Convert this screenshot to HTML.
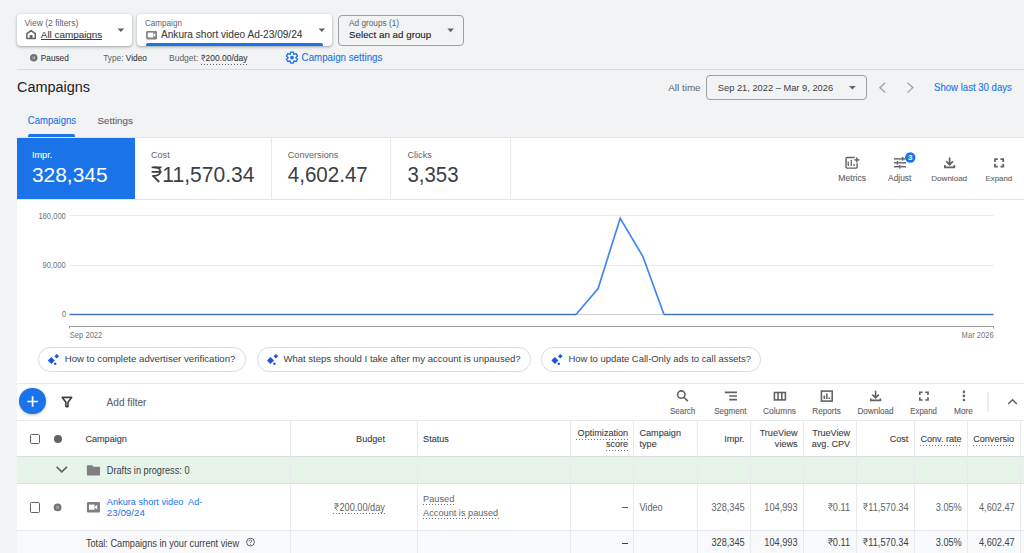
<!DOCTYPE html>
<html><head><meta charset="utf-8">
<style>
*{box-sizing:border-box;margin:0;padding:0}
html,body{width:1024px;height:553px;overflow:hidden;background:#f1f3f4;font-family:"Liberation Sans",sans-serif;color:#3c4043;position:relative}
.a{position:absolute;white-space:nowrap;line-height:1}
.box{position:absolute;background:#fff;border-radius:4px;box-shadow:0 1px 2px rgba(60,64,67,.3),0 1px 3px 1px rgba(60,64,67,.12)}
.hl{position:absolute;height:1px;background:#dadce0}
.vl{position:absolute;width:1px;background:#e3e3e3}
</style></head><body>
<div class="box" style="left:17px;top:14px;width:115px;height:32px"></div>
<div class="box" style="left:137px;top:14px;width:195px;height:32px"></div>
<div style="position:absolute;left:337.5px;top:14.5px;width:126px;height:31px;border:1px solid #9aa0a6;border-radius:4px"></div>
<div class="a" style="left:146px;top:43px;width:177px;height:2.6px;background:#1a73e8;border-radius:2px 2px 0 0"></div>
<div class="a" style="top:19px;left:24.60px;font-size:8.50px;color:#5f6368;">View (2 filters)</div>
<div class="a" style="top:30px;left:40.80px;font-size:9.90px;color:#3c4043;-webkit-text-stroke:0.1px currentColor;">All campaigns</div>
<div class="a" style="left:40.8px;top:39px;width:61.5px;height:1px;background:#3c4043"></div>
<div class="a" style="top:20px;left:145.00px;font-size:8.10px;color:#5f6368;transform:scaleY(1.04);transform-origin:0 6px;">Campaign</div>
<div class="a" style="top:30px;left:161.00px;font-size:10.10px;color:#3c4043;-webkit-text-stroke:0.1px currentColor;">Ankura short video Ad-23/09/24</div>
<div class="a" style="top:20px;left:349.00px;font-size:8.25px;color:#5f6368;transform:scaleY(1.04);transform-origin:0 6px;">Ad groups (1)</div>
<div class="a" style="top:30px;left:349.00px;font-size:9.80px;color:#202124;-webkit-text-stroke:0.1px currentColor;">Select an ad group</div>
<div class="a" style="top:55px;left:40.80px;font-size:8.25px;color:#3c4043;-webkit-text-stroke:0.1px currentColor;transform:scaleY(1.12);transform-origin:0 6px;">Paused</div>
<div class="a" style="top:54px;left:103.25px;font-size:8.30px;color:#5f6368;transform:scaleY(1.1);transform-origin:0 7px;">Type: <span style="color:#3c4043;-webkit-text-stroke:0.1px #3c4043">Video</span></div>
<div class="a" style="top:54px;left:169.00px;font-size:8.50px;color:#5f6368;">Budget: <span style="color:#3c4043;background:linear-gradient(to right,#5f6368 50%,transparent 50%) 0 100%/3px 1px repeat-x;padding-bottom:2px;-webkit-text-stroke:0.1px #3c4043"><svg style="display:inline-block;width:0.56em;height:0.72em;vertical-align:baseline;overflow:visible" viewBox="0 0 0.56 0.72"><g fill="none" stroke="currentColor"><path d="M0.03 0.04 H0.5 M0.03 0.245 H0.5" stroke-width="0.076"/><path d="M0.14 0.04 Q0.44 0.04 0.44 0.235 Q0.44 0.43 0.06 0.43" stroke-width="0.08"/><path d="M0.1 0.43 L0.39 0.715" stroke-width="0.09"/></g></svg>200.00/day</span></div>
<div class="a" style="top:53px;left:301.60px;font-size:9.75px;color:#1a73e8;-webkit-text-stroke:0.1px currentColor;transform:scaleY(1.04);transform-origin:0 8px;">Campaign settings</div>
<div class="hl" style="left:17px;top:69px;width:1007px"></div>
<div class="a" style="top:80px;left:17.00px;font-size:14.45px;color:#202124;transform:scaleY(1.04);transform-origin:0 12px;">Campaigns</div>
<div class="a" style="top:83px;left:668.30px;font-size:9.85px;color:#5f6368;">All time</div>
<div style="position:absolute;left:706px;top:75px;width:161px;height:24.5px;border:1px solid #9aa0a6;border-radius:4px"></div>
<div class="a" style="top:84px;left:717.80px;font-size:9.30px;color:#3c4043;transform:scaleY(1.04);transform-origin:0 7px;">Sep 21, 2022 – Mar 9, 2026</div>
<div class="a" style="top:83px;left:934.00px;font-size:9.60px;color:#1a73e8;-webkit-text-stroke:0.1px currentColor;transform:scaleY(1.06);transform-origin:0 8px;">Show last 30 days</div>
<div class="a" style="top:116px;left:27.80px;font-size:9.55px;color:#1a73e8;-webkit-text-stroke:0.1px currentColor;transform:scaleY(1.05);transform-origin:0 8px;">Campaigns</div>
<div class="a" style="top:116px;left:97.60px;font-size:9.75px;color:#5f6368;-webkit-text-stroke:0.1px currentColor;transform:scaleY(1.02);transform-origin:0 8px;">Settings</div>
<div class="a" style="left:28.4px;top:134px;width:46.3px;height:2.6px;background:#1a73e8;border-radius:2px 2px 0 0"></div>
<div class="a" style="left:17px;top:137.5px;width:1007px;height:416px;background:#fff"></div>
<div class="hl" style="left:17px;top:137px;width:1007px;background:#e3e5e8"></div>
<div class="a" style="left:17px;top:137.5px;width:118px;height:61.5px;background:#1a73e8"></div>
<div class="vl" style="left:271px;top:138px;height:61px;background:#e8eaed"></div>
<div class="vl" style="left:390px;top:138px;height:61px;background:#e8eaed"></div>
<div class="vl" style="left:510px;top:138px;height:61px;background:#e8eaed"></div>
<div class="hl" style="left:17px;top:199px;width:1007px;background:#e3e5e8"></div>
<div class="a" style="top:151px;left:287.80px;font-size:9.10px;color:#5f6368;">Conversions</div>
<div class="a" style="top:151px;left:32.00px;font-size:9.10px;color:#fff;-webkit-text-stroke:0.1px currentColor;">Impr.</div>
<div class="a" style="top:151px;left:151.00px;font-size:9.10px;color:#5f6368;">Cost</div>
<div class="a" style="top:151px;left:407.50px;font-size:9.10px;color:#5f6368;">Clicks</div>
<div class="a" style="top:165px;left:32.00px;font-size:20.90px;color:#fff;">328,345</div>
<div class="a" style="top:164px;left:150.58px;font-size:21.05px;color:#3c4043;transform:scaleY(1.03);transform-origin:0 18px;"><svg style="display:inline-block;width:0.56em;height:0.72em;vertical-align:baseline;overflow:visible" viewBox="0 0 0.56 0.72"><g fill="none" stroke="currentColor"><path d="M0.03 0.04 H0.5 M0.03 0.245 H0.5" stroke-width="0.076"/><path d="M0.14 0.04 Q0.44 0.04 0.44 0.235 Q0.44 0.43 0.06 0.43" stroke-width="0.08"/><path d="M0.1 0.43 L0.39 0.715" stroke-width="0.09"/></g></svg>11,570.34</div>
<div class="a" style="top:165px;left:287.80px;font-size:20.55px;color:#3c4043;transform:scaleY(1.06);transform-origin:0 17px;">4,602.47</div>
<div class="a" style="top:165px;left:407.50px;font-size:20.40px;color:#3c4043;transform:scaleY(1.06);transform-origin:0 17px;">3,353</div>
<div class="a" style="top:174px;left:838.30px;font-size:8.65px;color:#5f6368;-webkit-text-stroke:0.1px currentColor;">Metrics</div>
<div class="a" style="top:174px;left:888.10px;font-size:8.40px;color:#5f6368;-webkit-text-stroke:0.1px currentColor;">Adjust</div>
<div class="a" style="top:175px;left:931.30px;font-size:8.05px;color:#5f6368;-webkit-text-stroke:0.1px currentColor;">Download</div>
<div class="a" style="top:175px;left:985.50px;font-size:7.85px;color:#5f6368;-webkit-text-stroke:0.1px currentColor;">Expand</div>
<svg class="a" style="left:830px;top:150px" width="194" height="22" viewBox="830 150 194 22">
 <g fill="none" stroke="#5f6368" stroke-width="1.4">
  <path d="M854.6 157.5 H847 Q846 157.5 846 158.5 V167.1 Q846 168.1 847 168.1 H856.1 Q857.1 168.1 857.1 167.1 V163.3"/>
 </g>
 <g fill="#5f6368">
  <rect x="847.6" y="161.6" width="1.3" height="4.3"/><rect x="850.6" y="159.9" width="1.3" height="6"/><rect x="853.4" y="164.1" width="1.4" height="1.8"/>
  <rect x="856.1" y="157.3" width="1.4" height="5.2"/><rect x="854.2" y="159.2" width="5.2" height="1.4"/>
 </g>
 <g fill="#5f6368">
  <rect x="893.9" y="158.2" width="8" height="1.4"/><rect x="902.6" y="158.2" width="3" height="1.4"/>
  <rect x="893.9" y="162.1" width="3" height="1.4"/><rect x="898.2" y="162.1" width="7.8" height="1.4"/>
  <rect x="893.9" y="166" width="5.3" height="1.4"/><rect x="900.6" y="166" width="5.4" height="1.4"/>
  <rect x="901.8" y="157" width="1.5" height="3.7"/><rect x="896.7" y="161" width="1.5" height="3.6"/><rect x="899.1" y="164.9" width="1.5" height="3.7"/>
 </g>
 <circle cx="910.3" cy="157.5" r="5.2" fill="#1a73e8"/>
 <text x="910.3" y="160.4" font-size="8" fill="#fff" text-anchor="middle" font-family="Liberation Sans" font-weight="bold">3</text>
 <g fill="none" stroke="#5f6368" stroke-width="1.7">
  <path d="M949.6 157.6 V164.5 M946.3 161.4 L949.6 164.7 L952.9 161.4"/>
  <path d="M944.9 165 V167.3 H954.3 V165"/>
 </g>
 <g fill="none" stroke="#5f6368" stroke-width="1.8">
  <path d="M995 162 V159.2 H997.8 M1000.4 159.2 H1003.2 V162 M1003.2 163.8 V166.6 H1000.4 M997.8 166.6 H995 V163.8"/>
 </g>
</svg>
<svg class="a" style="left:0;top:200px" width="1024" height="180" viewBox="0 200 1024 180">
 <path d="M69.5 215.5 H993.5 M69.5 265.5 H993.5" stroke="#ebebeb" stroke-width="1"/>
 <path d="M69.5 314.5 H993.5" stroke="#cccccc" stroke-width="1"/>
 <path d="M69.5 326.5 H993.5 M69.5 326 V328.5 M993.5 326 V328.5" stroke="#9e9e9e" stroke-width="1"/>
 <path d="M69.5 314.5 L576 314.5 M664 314.5 L993.5 314.5" fill="none" stroke="#4673c2" stroke-width="1.5"/>
 <path d="M576 314.5 L598.1 288.5 L620.2 218.2 L642.8 256.3 L664 314.5" fill="none" stroke="#4285f4" stroke-width="1.7" stroke-linejoin="miter"/>
</svg>
<div class="a" style="top:213px;left:38.40px;font-size:7.60px;color:#757575;transform:scaleY(1.12);transform-origin:0 6px;">180,000</div>
<div class="a" style="top:262px;left:42.55px;font-size:7.60px;color:#757575;transform:scaleY(1.12);transform-origin:0 6px;">90,000</div>
<div class="a" style="top:311px;left:61.97px;font-size:7.60px;color:#757575;transform:scaleY(1.12);transform-origin:0 6px;">0</div>
<div class="a" style="top:332px;left:69.80px;font-size:7.60px;color:#757575;transform:scaleY(1.1);transform-origin:0 6px;">Sep 2022</div>
<div class="a" style="top:332px;left:961.59px;font-size:7.60px;color:#757575;transform:scaleY(1.1);transform-origin:0 6px;">Mar 2026</div>
<div class="a" style="left:37.8px;top:347.3px;width:208.1px;height:24.4px;border:1px solid #dadce0;border-radius:12.2px"></div>
<div class="a" style="left:257px;top:347.3px;width:273.7px;height:24.4px;border:1px solid #dadce0;border-radius:12.2px"></div>
<div class="a" style="left:541.4px;top:347.3px;width:219.8px;height:24.4px;border:1px solid #dadce0;border-radius:12.2px"></div>
<div class="a" style="top:354px;left:64.70px;font-size:9.65px;color:#3c4043;">How to complete advertiser verification?</div>
<div class="a" style="top:354px;left:283.40px;font-size:9.55px;color:#3c4043;">What steps should I take after my account is unpaused?</div>
<div class="a" style="top:354px;left:568.40px;font-size:9.45px;color:#3c4043;">How to update Call-Only ads to call assets?</div>
<svg class="a" style="left:0;top:345px" width="620" height="30" viewBox="0 345 620 30">
 <g id="sp" fill="#1a56db">
  <path d="M51.3 357 L54.8 360.5 L51.3 364 L47.8 360.5 Z"/>
  <path d="M56.7 354 L59 356.3 L56.7 358.6 L54.4 356.3 Z"/>
  <circle cx="55.2" cy="363.7" r="1.2"/>
 </g>
 <use href="#sp" x="219.2"/>
 <use href="#sp" x="503.6"/>
</svg>
<div class="hl" style="left:17px;top:383px;width:1007px;background:#e8eaed"></div>
<div class="a" style="left:19.4px;top:388px;width:26.4px;height:26.4px;border-radius:50%;background:#1a73e8;box-shadow:0 1px 3px rgba(60,64,67,.35)"></div>
<svg class="a" style="left:0;top:380px" width="1024" height="40" viewBox="0 380 1024 40">
 <path d="M32.6 396.2 V406.8 M27.3 401.5 H37.9" stroke="#fff" stroke-width="1.7"/>
 <path d="M62.3 397.4 H71.6 L68 402.2 V406.6 H65.9 V402.2 Z" fill="none" stroke="#3c4043" stroke-width="1.6" stroke-linejoin="round"/>
 <g fill="none" stroke="#5f6368" stroke-width="1.6">
  <circle cx="681.3" cy="394.6" r="3.7"/>
  <path d="M684 397.3 L687.8 401.1"/>
  <path d="M724.8 392.4 H737 M729.2 396 H737 M729.2 399.6 H737"/>
  <rect x="774.4" y="392.5" width="11" height="7.4"/>
  <path d="M778 392.5 V399.9 M781.8 392.5 V399.9"/>
  <rect x="821.4" y="391.1" width="10.8" height="10"/>
  <path d="M824.3 399 V395.5 M826.8 399 V393.5 M829.3 399 V397.5"/>
  <path d="M875.6 390.8 V397.8 M872.4 394.6 L875.6 397.8 L878.8 394.6"/>
  <path d="M870.8 398.5 V400.4 H880.4 V398.5"/>
  <path d="M919.8 395 V392.3 H922.6 M925.2 392.3 H928 V395 M928 397.3 V400 H925.2 M922.6 400 H919.8 V397.3"/>
  <path d="M1008.2 404 L1012.5 399.8 L1016.8 404"/>
 </g>
 <g fill="#5f6368"><circle cx="963.9" cy="391.9" r="1.3"/><circle cx="963.9" cy="395.9" r="1.3"/><circle cx="963.9" cy="400" r="1.3"/></g>
 <path d="M988 391.6 V412" stroke="#dadce0" stroke-width="1"/>
</svg>
<div class="a" style="top:398px;left:106.60px;font-size:10.10px;color:#5f6368;-webkit-text-stroke:0.1px currentColor;">Add filter</div>
<div class="a" style="top:408px;left:669.90px;font-size:8.00px;color:#5f6368;-webkit-text-stroke:0.1px currentColor;transform:scaleY(1.1);transform-origin:0 6px;">Search</div>
<div class="a" style="top:408px;left:714.20px;font-size:8.10px;color:#5f6368;-webkit-text-stroke:0.1px currentColor;transform:scaleY(1.1);transform-origin:0 6px;">Segment</div>
<div class="a" style="top:407px;left:763.10px;font-size:8.35px;color:#5f6368;-webkit-text-stroke:0.1px currentColor;transform:scaleY(1.1);transform-origin:0 7px;">Columns</div>
<div class="a" style="top:408px;left:812.30px;font-size:8.15px;color:#5f6368;-webkit-text-stroke:0.1px currentColor;transform:scaleY(1.1);transform-origin:0 6px;">Reports</div>
<div class="a" style="top:408px;left:857.50px;font-size:8.15px;color:#5f6368;-webkit-text-stroke:0.1px currentColor;transform:scaleY(1.1);transform-origin:0 6px;">Download</div>
<div class="a" style="top:408px;left:910.30px;font-size:7.85px;color:#5f6368;-webkit-text-stroke:0.1px currentColor;transform:scaleY(1.1);transform-origin:0 6px;">Expand</div>
<div class="a" style="top:407px;left:954.00px;font-size:8.35px;color:#5f6368;-webkit-text-stroke:0.1px currentColor;transform:scaleY(1.1);transform-origin:0 7px;">More</div>
<div class="hl" style="left:17px;top:420px;width:1007px;background:#e8eaed"></div>
<div class="a" style="left:17px;top:456.5px;width:1007px;height:27px;background:#e6f4ea"></div>
<div class="a" style="left:17px;top:530.5px;width:1007px;height:23px;background:#f8f9fa"></div>
<div class="hl" style="left:17px;top:455.5px;width:1007px;background:#dadce0"></div>
<div class="hl" style="left:17px;top:483px;width:1007px;background:#e0e0e0"></div>
<div class="hl" style="left:17px;top:530px;width:1007px;background:#e8eaed"></div>
<div class="vl" style="left:290.0px;top:421px;height:132px;background:#e8eaed"></div>
<div class="vl" style="left:417.0px;top:421px;height:132px;background:#e8eaed"></div>
<div class="vl" style="left:570.0px;top:421px;height:132px;background:#e8eaed"></div>
<div class="vl" style="left:633.0px;top:421px;height:132px;background:#e8eaed"></div>
<div class="vl" style="left:697.0px;top:421px;height:132px;background:#e8eaed"></div>
<div class="vl" style="left:750.0px;top:421px;height:132px;background:#e8eaed"></div>
<div class="vl" style="left:803.1px;top:421px;height:132px;background:#e8eaed"></div>
<div class="vl" style="left:855.9px;top:421px;height:132px;background:#e8eaed"></div>
<div class="vl" style="left:914.1px;top:421px;height:132px;background:#e8eaed"></div>
<div class="vl" style="left:967.1px;top:421px;height:132px;background:#e8eaed"></div>
<div class="vl" style="left:1020.2px;top:421px;height:132px;background:#e8eaed"></div>
<div class="a" style="left:29.8px;top:433.5px;width:10.5px;height:10.3px;border:1.6px solid #5f6368;border-radius:1.5px"></div>
<div class="a" style="left:53.6px;top:434.5px;width:8.2px;height:8.2px;border-radius:50%;background:#5f6368"></div>
<div class="a" style="top:435px;left:356.10px;font-size:9.10px;color:#3c4043;-webkit-text-stroke:0.1px currentColor;transform:scaleY(1.05);transform-origin:0 7px;">Budget</div>
<div class="a" style="top:435px;left:85.40px;font-size:9.10px;color:#3c4043;-webkit-text-stroke:0.1px currentColor;transform:scaleY(1.05);transform-origin:0 7px;">Campaign</div>
<div class="a" style="top:435px;left:423.10px;font-size:9.10px;color:#3c4043;-webkit-text-stroke:0.1px currentColor;transform:scaleY(1.05);transform-origin:0 7px;">Status</div>
<div class="a" style="top:429px;left:577.62px;font-size:9.10px;color:#3c4043;-webkit-text-stroke:0.1px currentColor;">Optimization</div>
<div class="a" style="top:440px;left:605.95px;font-size:9.10px;color:#3c4043;-webkit-text-stroke:0.1px currentColor;">score</div>
<div class="a" style="left:576px;top:438.6px;width:52.2px;height:1px;background:linear-gradient(to right,#70757a 50%,transparent 50%) 0 0/3px 1px repeat-x"></div>
<div class="a" style="left:606px;top:449.5px;width:22.2px;height:1px;background:linear-gradient(to right,#70757a 50%,transparent 50%) 0 0/3px 1px repeat-x"></div>
<div class="a" style="top:429px;left:639.50px;font-size:9.10px;color:#3c4043;-webkit-text-stroke:0.1px currentColor;">Campaign</div>
<div class="a" style="top:440px;left:639.50px;font-size:9.10px;color:#3c4043;-webkit-text-stroke:0.1px currentColor;">type</div>
<div class="a" style="top:435px;left:724.27px;font-size:9.10px;color:#3c4043;-webkit-text-stroke:0.1px currentColor;transform:scaleY(1.05);transform-origin:0 7px;">Impr.</div>
<div class="a" style="top:429px;left:759.64px;font-size:9.10px;color:#3c4043;-webkit-text-stroke:0.1px currentColor;transform:scaleY(1.04);transform-origin:0 7px;">TrueView</div>
<div class="a" style="top:440px;left:774.84px;font-size:9.10px;color:#3c4043;-webkit-text-stroke:0.1px currentColor;transform:scaleY(1.04);transform-origin:0 7px;">views</div>
<div class="a" style="top:429px;left:812.24px;font-size:9.10px;color:#3c4043;-webkit-text-stroke:0.1px currentColor;transform:scaleY(1.04);transform-origin:0 7px;">TrueView</div>
<div class="a" style="top:440px;left:811.76px;font-size:9.10px;color:#3c4043;-webkit-text-stroke:0.1px currentColor;transform:scaleY(1.04);transform-origin:0 7px;">avg. CPV</div>
<div class="a" style="top:435px;left:889.69px;font-size:9.10px;color:#3c4043;-webkit-text-stroke:0.1px currentColor;transform:scaleY(1.05);transform-origin:0 7px;">Cost</div>
<div class="a" style="top:435px;left:920.40px;font-size:9.10px;color:#3c4043;-webkit-text-stroke:0.1px currentColor;transform:scaleY(1.05);transform-origin:0 7px;">Conv. rate</div>
<div class="a" style="top:435px;left:973.20px;font-size:9.10px;color:#3c4043;-webkit-text-stroke:0.1px currentColor;transform:scaleY(1.05);transform-origin:0 7px;">Conversio</div>
<div class="a" style="left:920.4px;top:444.6px;width:41.5px;height:1px;background:linear-gradient(to right,#70757a 50%,transparent 50%) 0 0/3px 1px repeat-x"></div>
<div class="a" style="left:973.2px;top:444.6px;width:41.5px;height:1px;background:linear-gradient(to right,#70757a 50%,transparent 50%) 0 0/3px 1px repeat-x"></div>
<svg class="a" style="left:0;top:456px" width="120" height="28" viewBox="0 456 120 28">
 <path d="M56.6 466.8 L61.8 471.8 L67 466.8" fill="none" stroke="#5f6368" stroke-width="1.6"/>
 <path d="M86.9 466 Q86.9 465.2 87.7 465.2 H92.1 L93.6 466.7 H99.2 Q100 466.7 100 467.5 V474.7 Q100 475.5 99.2 475.5 H87.7 Q86.9 475.5 86.9 474.7 Z" fill="#808080"/>
</svg>
<div class="a" style="top:467px;left:106.80px;font-size:9.20px;color:#3c4043;transform:scaleY(1.12);transform-origin:0 7px;">Drafts in progress: 0</div>
<div class="a" style="left:29.7px;top:502px;width:10.6px;height:10.6px;border:1.6px solid #5f6368;border-radius:1.5px"></div>
<svg class="a" style="left:0;top:484px" width="120" height="46" viewBox="0 484 120 46">
 <circle cx="57.6" cy="507.3" r="3.9" fill="#737373"/>
 <path d="M56.8 505.7 V508.9 M58.4 505.7 V508.9" stroke="#c4c4c4" stroke-width="0.8"/>
 <rect x="86.9" y="501.9" width="13.1" height="10.7" rx="1.3" fill="#808080"/>
 <rect x="89" y="504.6" width="5.6" height="5.1" fill="#fff"/>
 <path d="M94.4 507.15 L97.2 504.8 V509.5 Z" fill="#fff"/>
</svg>
<div class="a" style="top:498px;left:106.80px;font-size:9.20px;color:#1a73e8;transform:scaleY(1.07);transform-origin:0 7px;">Ankura short video&nbsp; Ad-</div>
<div class="a" style="top:508px;left:106.80px;font-size:9.80px;color:#1a73e8;">23/09/24</div>
<div class="a" style="top:504px;left:334.32px;font-size:9.20px;color:#5f6368;transform:scaleY(1.1);transform-origin:0 7px;"><svg style="display:inline-block;width:0.56em;height:0.72em;vertical-align:baseline;overflow:visible" viewBox="0 0 0.56 0.72"><g fill="none" stroke="currentColor"><path d="M0.03 0.04 H0.5 M0.03 0.245 H0.5" stroke-width="0.076"/><path d="M0.14 0.04 Q0.44 0.04 0.44 0.235 Q0.44 0.43 0.06 0.43" stroke-width="0.08"/><path d="M0.1 0.43 L0.39 0.715" stroke-width="0.09"/></g></svg>200.00/day</div>
<div class="a" style="left:333.3px;top:513px;width:51.7px;height:1px;background:linear-gradient(to right,#70757a 50%,transparent 50%) 0 0/3px 1px repeat-x"></div>
<div class="a" style="top:495px;left:423.10px;font-size:9.20px;color:#5f6368;transform:scaleY(1.08);transform-origin:0 7px;">Paused</div>
<div class="a" style="left:423.1px;top:504.3px;width:30.7px;height:1px;background:linear-gradient(to right,#70757a 50%,transparent 50%) 0 0/3px 1px repeat-x"></div>
<div class="a" style="top:509px;left:423.10px;font-size:9.20px;color:#5f6368;transform:scaleY(1.07);transform-origin:0 7px;">Account is paused</div>
<div class="a" style="left:423.1px;top:518.3px;width:76.2px;height:1px;background:linear-gradient(to right,#70757a 50%,transparent 50%) 0 0/3px 1px repeat-x"></div>
<div class="a" style="left:621.6px;top:507px;width:6.4px;height:1px;background:#5f6368"></div>
<div class="a" style="top:504px;left:639.40px;font-size:9.20px;color:#5f6368;transform:scaleY(1.1);transform-origin:0 7px;">Video</div>
<div class="a" style="top:504px;left:711.44px;font-size:9.20px;color:#5f6368;transform:scaleY(1.1);transform-origin:0 7px;">328,345</div>
<div class="a" style="top:504px;left:764.34px;font-size:9.20px;color:#5f6368;transform:scaleY(1.1);transform-origin:0 7px;">104,993</div>
<div class="a" style="top:504px;left:827.73px;font-size:9.20px;color:#5f6368;transform:scaleY(1.1);transform-origin:0 7px;"><svg style="display:inline-block;width:0.56em;height:0.72em;vertical-align:baseline;overflow:visible" viewBox="0 0 0.56 0.72"><g fill="none" stroke="currentColor"><path d="M0.03 0.04 H0.5 M0.03 0.245 H0.5" stroke-width="0.076"/><path d="M0.14 0.04 Q0.44 0.04 0.44 0.235 Q0.44 0.43 0.06 0.43" stroke-width="0.08"/><path d="M0.1 0.43 L0.39 0.715" stroke-width="0.09"/></g></svg>0.11</div>
<div class="a" style="top:504px;left:863.20px;font-size:9.20px;color:#5f6368;transform:scaleY(1.1);transform-origin:0 7px;"><svg style="display:inline-block;width:0.56em;height:0.72em;vertical-align:baseline;overflow:visible" viewBox="0 0 0.56 0.72"><g fill="none" stroke="currentColor"><path d="M0.03 0.04 H0.5 M0.03 0.245 H0.5" stroke-width="0.076"/><path d="M0.14 0.04 Q0.44 0.04 0.44 0.235 Q0.44 0.43 0.06 0.43" stroke-width="0.08"/><path d="M0.1 0.43 L0.39 0.715" stroke-width="0.09"/></g></svg>11,570.34</div>
<div class="a" style="top:504px;left:935.72px;font-size:9.20px;color:#5f6368;transform:scaleY(1.1);transform-origin:0 7px;">3.05%</div>
<div class="a" style="top:504px;left:978.98px;font-size:9.20px;color:#5f6368;transform:scaleY(1.1);transform-origin:0 7px;">4,602.47</div>
<div class="a" style="top:540px;left:85.90px;font-size:9.20px;color:#3c4043;transform:scaleY(1.1);transform-origin:0 7px;">Total: Campaigns in your current view</div>
<svg class="a" style="left:244px;top:536px" width="14" height="14" viewBox="244 536 14 14">
 <circle cx="250.5" cy="542.1" r="3.9" fill="none" stroke="#5f6368" stroke-width="1"/>
 <path d="M249.2 541.3 Q249.2 539.9 250.5 539.9 Q251.8 539.9 251.8 541.1 Q251.8 541.9 250.5 542.4 V543" fill="none" stroke="#5f6368" stroke-width="0.9"/>
 <circle cx="250.5" cy="544.2" r="0.5" fill="#5f6368"/>
</svg>
<div class="a" style="left:621.6px;top:542.7px;width:6.4px;height:1px;background:#3c4043"></div>
<div class="a" style="top:539px;left:711.44px;font-size:9.20px;color:#3c4043;transform:scaleY(1.1);transform-origin:0 7px;">328,345</div>
<div class="a" style="top:539px;left:764.34px;font-size:9.20px;color:#3c4043;transform:scaleY(1.1);transform-origin:0 7px;">104,993</div>
<div class="a" style="top:539px;left:827.73px;font-size:9.20px;color:#3c4043;transform:scaleY(1.1);transform-origin:0 7px;"><svg style="display:inline-block;width:0.56em;height:0.72em;vertical-align:baseline;overflow:visible" viewBox="0 0 0.56 0.72"><g fill="none" stroke="currentColor"><path d="M0.03 0.04 H0.5 M0.03 0.245 H0.5" stroke-width="0.076"/><path d="M0.14 0.04 Q0.44 0.04 0.44 0.235 Q0.44 0.43 0.06 0.43" stroke-width="0.08"/><path d="M0.1 0.43 L0.39 0.715" stroke-width="0.09"/></g></svg>0.11</div>
<div class="a" style="top:539px;left:863.20px;font-size:9.20px;color:#3c4043;transform:scaleY(1.1);transform-origin:0 7px;"><svg style="display:inline-block;width:0.56em;height:0.72em;vertical-align:baseline;overflow:visible" viewBox="0 0 0.56 0.72"><g fill="none" stroke="currentColor"><path d="M0.03 0.04 H0.5 M0.03 0.245 H0.5" stroke-width="0.076"/><path d="M0.14 0.04 Q0.44 0.04 0.44 0.235 Q0.44 0.43 0.06 0.43" stroke-width="0.08"/><path d="M0.1 0.43 L0.39 0.715" stroke-width="0.09"/></g></svg>11,570.34</div>
<div class="a" style="top:539px;left:935.72px;font-size:9.20px;color:#3c4043;transform:scaleY(1.1);transform-origin:0 7px;">3.05%</div>
<div class="a" style="top:539px;left:978.98px;font-size:9.20px;color:#3c4043;transform:scaleY(1.1);transform-origin:0 7px;">4,602.47</div>
<svg class="a" style="left:0;top:0" width="480" height="70" viewBox="0 0 480 70">
 <path d="M26.9 38.6 V33.6 L31.1 30.6 L35.3 33.6 V38.6 Z" fill="none" stroke="#5f6368" stroke-width="1.5" stroke-linejoin="round"/>
 <rect x="29.7" y="35" width="2.8" height="3.8" fill="#5f6368"/>
 <path d="M117.5 28.4 H124.2 L120.85 32 Z" fill="#5f6368"/>
 <rect x="146.1" y="30.9" width="10.9" height="8.5" rx="1.3" fill="#808080"/>
 <rect x="147.8" y="32.6" width="5.5" height="4.9" fill="#fff"/>
 <path d="M153 35.05 L155.3 33.1 V37 Z" fill="#fff"/>
 <path d="M318.6 28.4 H325 L321.8 32 Z" fill="#5f6368"/>
 <path d="M447.3 28.4 H453.9 L450.6 32.2 Z" fill="#5f6368"/>
 <circle cx="33.75" cy="57.8" r="3.75" fill="#737373"/>
 <path d="M33 56.3 V59.3 M34.5 56.3 V59.3" stroke="#c4c4c4" stroke-width="0.8"/>
 <g transform="translate(292 57.6)">
  <path d="M-1.28 -5.55 L1.28 -5.55 L1.90 -3.29 L4.17 -3.89 L5.45 -1.67 L3.80 0.00 L5.45 1.67 L4.17 3.89 L1.90 3.29 L1.28 5.55 L-1.28 5.55 L-1.90 3.29 L-4.17 3.89 L-5.45 1.67 L-3.80 0.00 L-5.45 -1.67 L-4.17 -3.89 L-1.90 -3.29 Z" fill="none" stroke="#1a73e8" stroke-width="1.35" stroke-linejoin="round"/>
  <circle r="1.9" fill="#1a73e8"/>
 </g>
</svg>
<svg class="a" style="left:840px;top:76px" width="80" height="24" viewBox="840 76 80 24">
 <path d="M849 86 H855.8 L852.4 89.5 Z" fill="#5f6368"/>
 <path d="M885.2 82.8 L879.9 87.7 L885.2 92.6" fill="none" stroke="#9aa0a6" stroke-width="1.3"/>
 <path d="M907.5 82.6 L912.8 87.6 L907.5 92.6" fill="none" stroke="#9aa0a6" stroke-width="1.3"/>
</svg>
</body></html>
